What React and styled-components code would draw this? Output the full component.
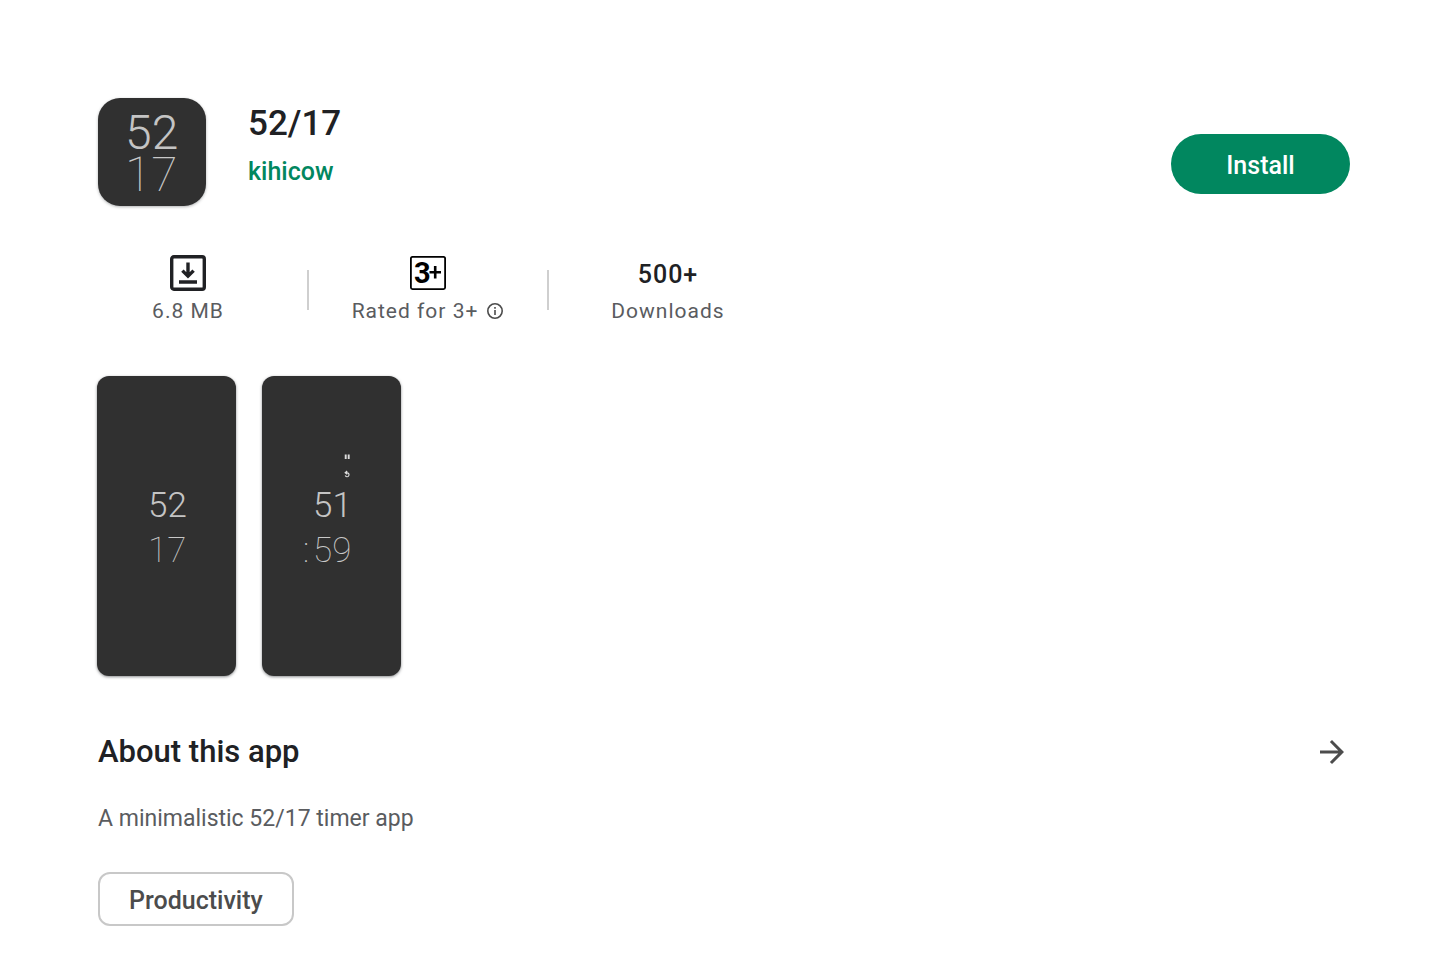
import React from "react";
import styled, { createGlobalStyle } from "styled-components";

const GlobalStyle = createGlobalStyle`
    * {
        box-sizing: border-box;
    }

    body {
        margin: 0;
        background-color: #fff;
        color: #202124;
        font-family: Roboto, "Noto Sans", sans-serif;
    }
`;

const Page = styled.main`
    padding: 98px 98px 42px;
`;

const Header = styled.header`
    display: flex;
    align-items: flex-start;
    justify-content: space-between;
`;

const AppInfo = styled.div`
    display: flex;
    gap: 42px;
`;

const AppIcon = styled.svg`
    display: block;
    width: 108px;
    height: 108px;
    border-radius: 22px;
    background-color: #303030;
    box-shadow: 0 1px 3px rgba(60, 64, 67, 0.4);
`;

const AppName = styled.h1`
    margin: 0;
    padding-top: 4px;
    font-size: 35px;
    font-weight: 500;
    line-height: 44px;
`;

const Developer = styled.a`
    display: block;
    padding-top: 10px;
    color: #01875f;
    font-size: 25px;
    font-weight: 500;
    line-height: 32px;
    text-decoration: none;
`;

const InstallButton = styled.button`
    width: 179px;
    height: 60px;
    margin-top: 36px;
    padding: 2px 0 0;
    border: 0;
    border-radius: 30px;
    background-color: #01875f;
    color: #fff;
    font-family: inherit;
    font-size: 25px;
    font-weight: 500;
    cursor: pointer;
`;

const Stats = styled.div`
    display: flex;
    align-items: center;
    gap: 29px;
    padding-top: 47px;
`;

const Stat = styled.div`
    display: flex;
    flex-direction: column;
    align-items: center;
    width: 180px;
`;

const StatValue = styled.div`
    display: flex;
    align-items: center;
    height: 40px;
    font-size: 25px;
    font-weight: 500;
    letter-spacing: 1px;
    line-height: 32px;
`;

const StatCount = styled.span`
    padding-top: 4px;
`;

const StatLabel = styled.div`
    display: flex;
    align-items: center;
    gap: 8px;
    color: #5a5c5f;
    font-size: 21px;
    letter-spacing: 1px;
    line-height: 36px;
    white-space: nowrap;
`;

const Divider = styled.div`
    width: 2px;
    height: 40px;
    margin-bottom: 2px;
    background-color: #cfcfcf;
`;

const IconButton = styled.button`
    display: flex;
    padding: 0;
    border: 0;
    background: none;
    color: #4c4c4c;
    cursor: pointer;
`;

const Screens = styled.div`
    display: flex;
    gap: 26px;
    margin-left: -1px;
    padding-top: 47px;
`;

const Screen = styled.svg`
    display: block;
    width: 139px;
    height: 300px;
    border-radius: 12px;
    background-color: #303030;
    box-shadow: 0 1px 3px rgba(60, 64, 67, 0.6);
`;

const Digits = styled.text`
    fill: ${props => (props.$thin ? "#c8c8c8" : "#c4c4c4")};
    font-size: ${props => (props.$large ? "48px" : "35px")};
    font-weight: ${props => (props.$thin ? 100 : 300)};
`;

const About = styled.section`
    padding-top: 56px;
`;

const AboutHeader = styled.div`
    display: flex;
    align-items: center;
    justify-content: space-between;
`;

const AboutTitle = styled.h2`
    margin: 0;
    font-size: 31px;
    font-weight: 500;
    line-height: 40px;
`;

const Description = styled.p`
    margin: 0;
    padding-top: 31px;
    color: #5a5c5f;
    font-size: 23px;
    line-height: 32px;
`;

const Tag = styled.a`
    display: inline-flex;
    align-items: center;
    height: 54px;
    margin-top: 37px;
    padding: 2px 29px 0;
    border: 2px solid #c8c8c8;
    border-radius: 12px;
    color: #4c4c4c;
    font-size: 25px;
    font-weight: 500;
    text-decoration: none;
`;

const DownloadIcon = () => (
    <svg width="36" height="36" viewBox="0 0 36 36" aria-hidden="true">
        <rect
            x="1.7"
            y="1.7"
            width="32.6"
            height="32.6"
            rx="2.2"
            fill="none"
            stroke="#202124"
            strokeWidth="3.4"
        />
        <path
            d="M18 7.5V20M12.4 15.6L18 21.2L23.6 15.6M9 27H27"
            fill="none"
            stroke="#202124"
            strokeWidth="3.4"
        />
    </svg>
);

const RatingIcon = () => (
    <svg width="36" height="34" viewBox="0 0 36 34" role="img" aria-label="3+">
        <rect
            x="0.9"
            y="0.9"
            width="34.2"
            height="32.2"
            rx="1.6"
            fill="#fff"
            stroke="#000"
            strokeWidth="1.8"
        />
        <text
            x="4"
            y="27"
            fontFamily="Roboto, sans-serif"
            fontSize="29"
            fontWeight="700"
            letterSpacing="0"
        >
            3
        </text>
        <path d="M25.2 10V22.5M19.5 16.2H31" stroke="#000" strokeWidth="2.6" />
    </svg>
);

const InfoIcon = () => (
    <svg width="18" height="18" viewBox="0 0 18 18" aria-hidden="true">
        <circle
            cx="9"
            cy="9"
            r="7.2"
            fill="none"
            stroke="currentColor"
            strokeWidth="1.6"
        />
        <path
            d="M9 8V13M9 5V6.8"
            stroke="currentColor"
            strokeWidth="1.6"
        />
    </svg>
);

const ArrowIcon = () => (
    <svg width="36" height="36" viewBox="0 0 24 24" aria-hidden="true">
        <path
            d="M12 4l-1.41 1.41L16.17 11H4v2h12.17l-5.58 5.59L12 20l8-8z"
            fill="currentColor"
        />
    </svg>
);

const StartScreen = () => (
    <Screen viewBox="0 0 139 300" role="img" aria-label="Start screen">
        <Digits x="51" y="141">
            52
        </Digits>
        <Digits x="51" y="186" $thin>
            17
        </Digits>
    </Screen>
);

const TimerScreen = () => (
    <Screen viewBox="0 0 139 300" role="img" aria-label="Running timer">
        <path d="M83.7 78.5V83M86.7 78.5V83" stroke="#ddd" strokeWidth="1.9" />
        <path
            d="M83 96.8H85.4A2 2 0 1 1 83.2 99.6M85.2 95L83.2 96.8L85.2 98.4"
            fill="none"
            stroke="#ddd"
            strokeWidth="1.2"
        />
        <Digits x="51" y="141">
            51
        </Digits>
        <Digits x="41" y="186" $thin>
            :
        </Digits>
        <Digits x="51" y="186" $thin>
            59
        </Digits>
    </Screen>
);

const App = () => (
    <>
        <GlobalStyle />
        <Page>
            <Header>
                <AppInfo>
                    <AppIcon viewBox="0 0 108 108" role="img" aria-label="52/17">
                        <Digits x="27" y="51" $large>
                            52
                        </Digits>
                        <Digits x="27" y="93" $large $thin>
                            17
                        </Digits>
                    </AppIcon>
                    <div>
                        <AppName>52/17</AppName>
                        <Developer href="#developer">kihicow</Developer>
                    </div>
                </AppInfo>
                <InstallButton type="button">Install</InstallButton>
            </Header>

            <Stats>
                <Stat>
                    <StatValue>
                        <DownloadIcon />
                    </StatValue>
                    <StatLabel>6.8 MB</StatLabel>
                </Stat>
                <Divider />
                <Stat>
                    <StatValue>
                        <RatingIcon />
                    </StatValue>
                    <StatLabel>
                        Rated for 3+
                        <IconButton type="button" aria-label="Rating details">
                            <InfoIcon />
                        </IconButton>
                    </StatLabel>
                </Stat>
                <Divider />
                <Stat>
                    <StatValue>
                        <StatCount>500+</StatCount>
                    </StatValue>
                    <StatLabel>Downloads</StatLabel>
                </Stat>
            </Stats>

            <Screens>
                <StartScreen />
                <TimerScreen />
            </Screens>

            <About>
                <AboutHeader>
                    <AboutTitle>About this app</AboutTitle>
                    <IconButton type="button" aria-label="More about this app">
                        <ArrowIcon />
                    </IconButton>
                </AboutHeader>
                <Description>A minimalistic 52/17 timer app</Description>
                <Tag href="#productivity">Productivity</Tag>
            </About>
        </Page>
    </>
);

export default App;
